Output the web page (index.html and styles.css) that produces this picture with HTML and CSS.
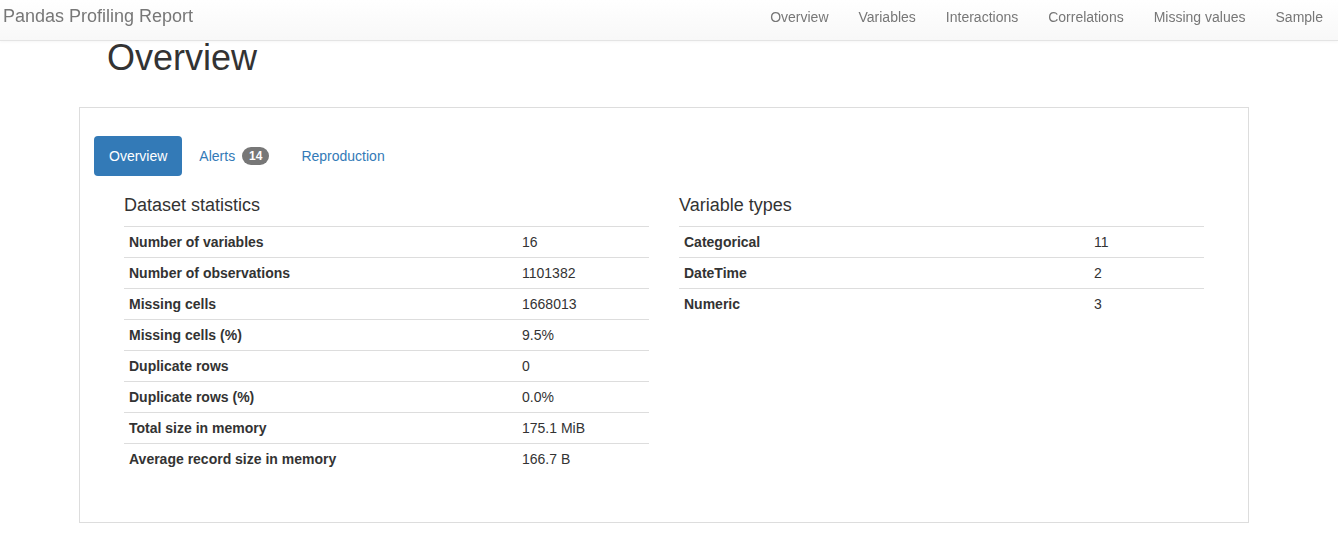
FILE: index.html
```html
<!DOCTYPE html>
<html lang="en">
<head>
<meta charset="utf-8">
<title>Pandas Profiling Report</title>
<link rel="stylesheet" href="styles.css">
</head>
<body>
<nav class="navbar">
  <a class="brand" href="#">Pandas Profiling Report</a>
  <ul class="nav-links">
    <li><a href="#">Overview</a></li>
    <li><a href="#">Variables</a></li>
    <li><a href="#">Interactions</a></li>
    <li><a href="#">Correlations</a></li>
    <li><a href="#">Missing values</a></li>
    <li><a href="#">Sample</a></li>
  </ul>
</nav>
<main class="page">
  <h1 class="page-title">Overview</h1>
  <section class="panel">
    <ul class="pills">
      <li><a class="pill active" href="#">Overview</a></li>
      <li><a class="pill" href="#">Alerts <span class="badge">14</span></a></li>
      <li><a class="pill" href="#">Reproduction</a></li>
    </ul>
    <div class="tab-content">
      <div class="col">
        <h4 class="section-title">Dataset statistics</h4>
        <table class="stats stats-left">
          <tbody>
            <tr><th>Number of variables</th><td>16</td></tr>
            <tr><th>Number of observations</th><td>1101382</td></tr>
            <tr><th>Missing cells</th><td>1668013</td></tr>
            <tr><th>Missing cells (%)</th><td>9.5%</td></tr>
            <tr><th>Duplicate rows</th><td>0</td></tr>
            <tr><th>Duplicate rows (%)</th><td>0.0%</td></tr>
            <tr><th>Total size in memory</th><td>175.1 MiB</td></tr>
            <tr><th>Average record size in memory</th><td>166.7 B</td></tr>
          </tbody>
        </table>
      </div>
      <div class="col">
        <h4 class="section-title">Variable types</h4>
        <table class="stats stats-right">
          <tbody>
            <tr><th>Categorical</th><td>11</td></tr>
            <tr><th>DateTime</th><td>2</td></tr>
            <tr><th>Numeric</th><td>3</td></tr>
          </tbody>
        </table>
      </div>
    </div>
  </section>
</main>
</body>
</html>
```
FILE: styles.css
```css
* { box-sizing: border-box; }

html, body {
  margin: 0;
  padding: 0;
  background: #fff;
}

body {
  font-family: "Liberation Sans", Arial, Helvetica, sans-serif;
  font-size: 14px;
  line-height: 20px;
  color: #333;
}

a { text-decoration: none; }

/* Navbar (fixed, overlays the page) */
.navbar {
  position: fixed;
  top: 0;
  left: 0;
  right: 0;
  height: 41px;
  display: flex;
  justify-content: space-between;
  align-items: flex-start;
  background: linear-gradient(to bottom, #ffffff 0%, #f8f8f8 100%);
  border-bottom: 1px solid #e4e4e4;
  box-shadow: 0 1px 3px rgba(0, 0, 0, 0.04);
  z-index: 10;
}

.brand {
  font-size: 18px;
  line-height: 20px;
  color: #777;
  padding: 6px 0 0 3px;
}

.nav-links {
  list-style: none;
  margin: 0;
  padding: 0;
  display: flex;
}

.nav-links a {
  display: block;
  color: #777;
  font-size: 14px;
  line-height: 20px;
  padding: 7px 15px 0;
}

/* Page */
.page {
  padding: 38px 0 0 79px;
  width: 1249px;
}

.page-title {
  margin: 0 0 29px 28px;
  font-size: 36px;
  font-weight: 400;
  line-height: 39.6px;
  color: #333;
}

.panel {
  width: 1170px;
  border: 1px solid #ddd;
  padding: 28px 14px 28px;
  background: #fff;
}

.pills {
  list-style: none;
  margin: 0;
  padding: 0;
  display: flex;
  gap: 2px;
}

.pill {
  display: block;
  padding: 10px 15px;
  line-height: 20px;
  font-size: 14px;
  color: #337ab7;
  border-radius: 4px;
}

.pill.active {
  background: #337ab7;
  color: #fff;
}

.badge {
  display: inline-block;
  min-width: 10px;
  padding: 3px 7px;
  margin-left: 3px;
  font-size: 12px;
  font-weight: 700;
  line-height: 1;
  color: #fff;
  text-align: center;
  vertical-align: middle;
  background: #777;
  border-radius: 10px;
  position: relative;
  top: -1px;
}

.tab-content {
  display: flex;
  padding: 0 15px;
}

.col {
  width: 50%;
  padding: 0 15px;
}

.section-title {
  margin: 20px 0 10px;
  font-size: 18px;
  font-weight: 400;
  line-height: 19.8px;
  color: #333;
}

.stats {
  width: 100%;
  border-collapse: collapse;
  margin-bottom: 20px;
}

.stats th,
.stats td {
  border-top: 1px solid #ddd;
  padding: 5px;
  line-height: 20px;
  font-size: 14px;
  text-align: left;
  vertical-align: top;
  color: #333;
}

.stats th { font-weight: 700; }
.stats td { font-weight: 400; }

.stats-left th { width: 393px; }
.stats-right th { width: 410px; }
```
